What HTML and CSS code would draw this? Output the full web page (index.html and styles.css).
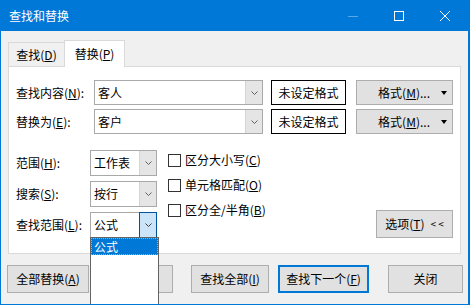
FILE: index.html
```html
<!DOCTYPE html>
<html lang="zh-CN">
<head>
    <meta charset="UTF-8">
    <title>查找和替换</title>
    <link rel="stylesheet" href="styles.css">
</head>
<body>
    <div class="window">
        <div class="titlebar">
            <span class="title">查找和替换</span>
            <div class="controls">
                <div class="ctrl ctrl-min">
                    <svg width="10" height="10" viewBox="0 0 10 10"><line x1="0" y1="5.5" x2="10" y2="5.5" stroke="#fff" stroke-opacity="0.35"/></svg>
                </div>
                <div class="ctrl">
                    <svg width="10" height="10" viewBox="0 0 10 10"><rect x="0.5" y="0.5" width="9" height="9" fill="none" stroke="#fff"/></svg>
                </div>
                <div class="ctrl">
                    <svg width="10" height="10" viewBox="0 0 10 10"><path d="M0 0 L10 10 M10 0 L0 10" stroke="#fff" stroke-width="1"/></svg>
                </div>
            </div>
        </div>

        <div class="tabs">
            <div class="tab">查找(<u>D</u>)</div>
            <div class="tab active">替换(<u>P</u>)</div>
        </div>

        <div class="panel">
            <div class="find-row">
                <label class="find-label">查找内容(<u>N</u>):</label>
                <div class="combo combo-wide">
                    <span class="combo-text">客人</span>
                    <span class="combo-btn"><svg width="7" height="4" viewBox="0 0 7 4"><polyline points="0.5,0.5 3.5,3.5 6.5,0.5" fill="none" stroke="#606060"/></svg></span>
                </div>
                <div class="fmt-box">未设定格式</div>
                <div class="btn fmt-btn"><span>格式(<u>M</u>)...</span><span class="caret"></span></div>
            </div>
            <div class="find-row">
                <label class="find-label">替换为(<u>E</u>):</label>
                <div class="combo combo-wide">
                    <span class="combo-text">客户</span>
                    <span class="combo-btn"><svg width="7" height="4" viewBox="0 0 7 4"><polyline points="0.5,0.5 3.5,3.5 6.5,0.5" fill="none" stroke="#606060"/></svg></span>
                </div>
                <div class="fmt-box">未设定格式</div>
                <div class="btn fmt-btn"><span>格式(<u>M</u>)...</span><span class="caret"></span></div>
            </div>

            <div class="options">
                <div class="scope">
                    <div class="scope-row">
                        <label class="scope-label">范围(<u>H</u>):</label>
                        <div class="combo combo-small">
                            <span class="combo-text">工作表</span>
                            <span class="combo-btn"><svg width="7" height="4" viewBox="0 0 7 4"><polyline points="0.5,0.5 3.5,3.5 6.5,0.5" fill="none" stroke="#606060"/></svg></span>
                        </div>
                    </div>
                    <div class="scope-row">
                        <label class="scope-label">搜索(<u>S</u>):</label>
                        <div class="combo combo-small">
                            <span class="combo-text">按行</span>
                            <span class="combo-btn"><svg width="7" height="4" viewBox="0 0 7 4"><polyline points="0.5,0.5 3.5,3.5 6.5,0.5" fill="none" stroke="#606060"/></svg></span>
                        </div>
                    </div>
                    <div class="scope-row last">
                        <label class="scope-label">查找范围(<u>L</u>):</label>
                        <div class="combo combo-small open">
                            <span class="combo-text">公式</span>
                            <span class="combo-btn"><svg width="7" height="4" viewBox="0 0 7 4"><polyline points="0.5,0.5 3.5,3.5 6.5,0.5" fill="none" stroke="#404040"/></svg></span>
                            <div class="dropdown">
                                <div class="dropdown-item selected">公式</div>
                            </div>
                        </div>
                    </div>
                </div>

                <div class="checks">
                    <div class="check"><span class="box"></span>区分大小写(<u>C</u>)</div>
                    <div class="check"><span class="box"></span>单元格匹配(<u>O</u>)</div>
                    <div class="check"><span class="box"></span>区分全/半角(<u>B</u>)</div>
                </div>

                <div class="btn opt-btn">选项(<u>T</u>)<span class="chev">&lt; &lt;</span></div>
            </div>
        </div>

        <div class="actions">
            <div class="btn act-replace-all">全部替换(<u>A</u>)</div>
            <div class="btn act-replace">替换(<u>R</u>)</div>
            <div class="btn act-find-all">查找全部(<u>I</u>)</div>
            <div class="btn act-find-next default">查找下一个(<u>F</u>)</div>
            <div class="btn act-close">关闭</div>
        </div>
    </div>
</body>
</html>
```

FILE: styles.css
```css
* {
    box-sizing: border-box;
}
body {
    margin: 0;
    font-family: "Noto Sans CJK SC", "Noto Sans", sans-serif;
    font-size: 12px;
    line-height: 16px;
    color: #000;
    background: #fff;
}
u {
    text-decoration: underline;
    text-underline-offset: 1px;
}
.window {
    width: 470px;
    height: 305px;
    background-color: #f0f0f0;
    border: 1px solid #0078d7;
    border-top: none;
    border-right-width: 2px;
    overflow: hidden;
}
.titlebar {
    height: 31px;
    background-color: #0078d7;
    color: #fff;
    display: flex;
    align-items: center;
    padding-left: 8px;
}
.controls {
    margin-left: auto;
    display: flex;
    height: 100%;
}
.ctrl {
    width: 46px;
    height: 31px;
    display: flex;
    align-items: center;
    justify-content: center;
}
.ctrl svg {
    display: block;
}

/* Tabs */
.tabs {
    display: flex;
    align-items: flex-end;
    height: 26px;
    margin-top: 9px;
    padding-left: 7px;
}
.tab {
    height: 24px;
    width: 57px;
    border: 1px solid #d9d9d9;
    border-bottom: none;
    display: flex;
    align-items: center;
    justify-content: center;
    padding-top: 1px;
}
.tab.active {
    height: 27px;
    width: 61px;
    margin-left: -1px;
    margin-bottom: -1px;
    background: #fff;
    position: relative;
    z-index: 1;
    padding-top: 0;
}

/* Tab page */
.panel {
    margin-left: 7px;
    width: 453px;
    height: 188px;
    background: #fff;
    border: 1px solid #d9d9d9;
    padding: 13px 6px 0 7px;
}
.find-row {
    display: flex;
    align-items: center;
    height: 25px;
}
.find-row + .find-row {
    margin-top: 4px;
}
.find-label {
    width: 78px;
}
.combo {
    display: flex;
    height: 100%;
    background: #fff;
    border: 1px solid #a9a9a9;
    position: relative;
}
.combo-wide {
    width: 169px;
}
.combo-small {
    width: 67px;
}
.combo-text {
    flex: 1;
    display: flex;
    align-items: center;
    padding-left: 3px;
}
.combo-btn {
    width: 17px;
    display: flex;
    align-items: center;
    justify-content: center;
    background: #e5e5e5;
    border-left: 1px solid #d4d4d4;
}
.combo.open .combo-btn {
    background: #cce4f7;
    border: 1px solid #005499;
    margin: -1px -1px -1px 0;
    width: 18px;
}
.fmt-box {
    margin-left: 8px;
    width: 75px;
    height: 100%;
    border: 1px solid #000;
    display: flex;
    align-items: center;
    justify-content: center;
}
.btn {
    background: #e1e1e1;
    border: 1px solid #adadad;
    display: flex;
    align-items: center;
    justify-content: center;
}
.fmt-btn {
    margin-left: 10px;
    width: 97px;
    height: 100%;
    justify-content: flex-end;
    padding-right: 5px;
}
.caret {
    margin-left: 11px;
    width: 0;
    height: 0;
    border-left: 3.5px solid transparent;
    border-right: 3.5px solid transparent;
    border-top: 4px solid #000;
}

/* Options */
.options {
    display: flex;
    margin-top: 16px;
}
.scope-row {
    display: flex;
    align-items: center;
    height: 26px;
    margin-bottom: 5px;
}
.scope-row.last {
    margin-top: 1px;
    margin-bottom: 0;
}
.scope-label {
    width: 74px;
}
.dropdown {
    position: absolute;
    top: 100%;
    left: -1px;
    width: 69px;
    height: 70px;
    background: #fff;
    border: 1px solid #646464;
    z-index: 5;
}
.dropdown-item {
    height: 17px;
    padding-left: 3px;
    display: flex;
    align-items: center;
}
.dropdown-item.selected {
    background: #0078d7;
    color: #fff;
    outline: 1px dotted #f0a040;
    outline-offset: -1px;
}
.checks {
    margin-left: 11px;
    display: flex;
    flex-direction: column;
    gap: 5px;
}
.check {
    height: 20px;
    display: flex;
    align-items: center;
}
.box {
    width: 13px;
    height: 13px;
    border: 1px solid #333;
    background: #fff;
    margin-right: 4px;
}
.opt-btn {
    margin-left: auto;
    margin-right: 1px;
    align-self: flex-end;
    width: 77px;
    height: 28px;
}
.chev {
    margin-left: 6px;
    font-size: 10px;
}

/* Bottom buttons */
.actions {
    display: flex;
    margin-top: 11px;
    padding-left: 6px;
}
.actions .btn {
    height: 28px;
}
.act-replace-all {
    width: 82px;
}
.act-replace {
    width: 77px;
    margin-left: 7px;
}
.act-find-all {
    width: 78px;
    margin-left: 18px;
}
.act-find-next {
    width: 91px;
    margin-left: 9px;
}
.act-close {
    width: 75px;
    margin-left: 19px;
}
.btn.default {
    border: 2px solid #0078d7;
}
```
